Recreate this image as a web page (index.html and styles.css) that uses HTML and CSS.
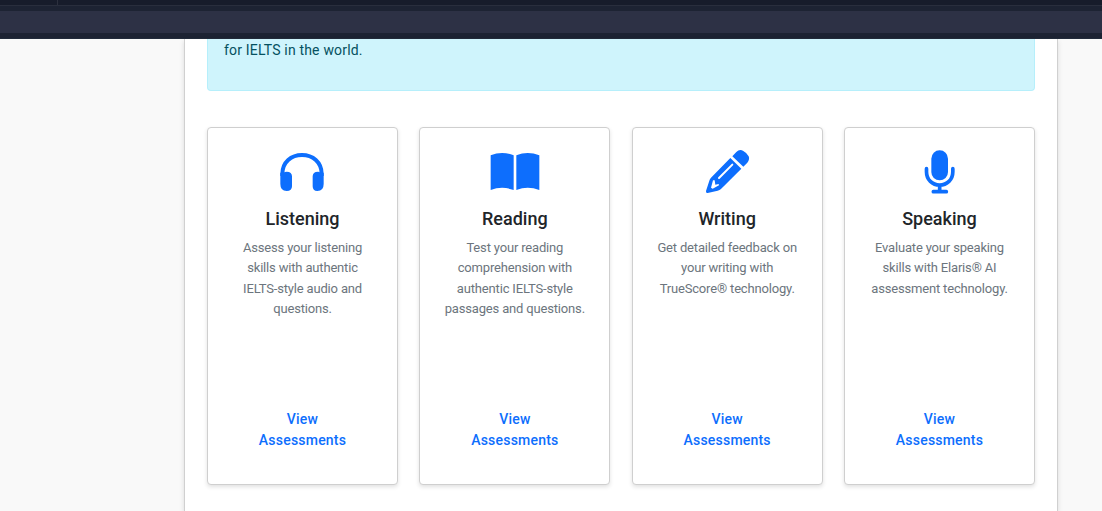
FILE: index.html
```
<!DOCTYPE html>
<html lang="en">
<head>
<meta charset="utf-8">
<title>IELTS Assessments</title>
<link rel="stylesheet" href="styles.css">
</head>
<body>
<header class="topbar">
  <div class="tabs"><span class="tab"></span></div>
  <div class="toolbar"></div>
</header>
<main class="panel">
  <div class="alert">for IELTS in the world.</div>
  <div class="cards">
    <section class="card">
      <svg class="icon" viewBox="-6 0 210 180"><path d="M37 108V102C37 66 64 45 96 45S155 66 155 102V108" fill="none" stroke="currentColor" stroke-width="12"/><path d="M31 98H40Q45 95 50 95Q66 95 66 109V139Q66 153 50 153Q31 153 31 132ZM161 98H152Q147 95 144 95Q128 95 128 109V139Q128 153 142 153Q161 153 161 132Z"/></svg>
      <h2 class="title">Listening</h2>
      <p class="copy">Assess your listening<br>skills with authentic<br>IELTS-style audio and<br>questions.</p>
      <a class="link">View<br>Assessments</a>
    </section>
    <section class="card">
      <svg class="icon" viewBox="0 0 210 180"><path d="M32 46Q66 32 101 46V150Q66 137 32 150ZM109 46Q143 32 178 46V150Q143 137 109 150Z"/></svg>
      <h2 class="title">Reading</h2>
      <p class="copy">Test your reading<br>comprehension with<br>authentic IELTS-style<br>passages and questions.</p>
      <a class="link">View<br>Assessments</a>
    </section>
    <section class="card">
      <svg class="icon" viewBox="0 0 210 180"><path d="M121 49L133 36Q143 26 154 33Q164 38 170 49Q174 58 166 68L154 80Z"/><path d="M115 54L148 86L87 147Q83 151 77 152L47 159Q41 160 42 153L52 122Q53 117 57 113Z"/><path d="M81 114L121 74" stroke="#fff" stroke-width="6" stroke-linecap="round"/><path d="M63 121L57 143L62 146L81 136L80 132L70 134L68 121Z" fill="#fff"/></svg>
      <h2 class="title">Writing</h2>
      <p class="copy">Get detailed feedback on<br>your writing with<br>TrueScore® technology.</p>
      <a class="link">View<br>Assessments</a>
    </section>
    <section class="card">
      <svg class="icon" viewBox="-2 -1 210 180"><rect x="80" y="30" width="50" height="90" rx="25"/><path d="M65.500 85V94C65.500 118 83 134 105 134S144.500 118 144.500 94V85M105 134V153M86 154H125" fill="none" stroke="currentColor" stroke-width="11" stroke-linecap="round"/></svg>
      <h2 class="title">Speaking</h2>
      <p class="copy">Evaluate your speaking<br>skills with Elaris® AI<br>assessment technology.</p>
      <a class="link">View<br>Assessments</a>
    </section>
  </div>
</main>
</body>
</html>
```
FILE: styles.css
```
* { box-sizing: border-box; }
body {
  margin: 0;
  height: 511px;
  overflow: hidden;
  display: flex;
  flex-direction: column;
  background: #f9f9f9;
  font-family: Roboto, "Liberation Sans", sans-serif;
  color: #212529;
}
.topbar { height: 39px; flex: none; background: #1d2333; border-bottom: 1px solid #222b3b; }
.tabs { height: 6px; background: #171c2b; border-bottom: 1px solid #292e3d; }
.tab { display: block; width: 58px; height: 5px; border-right: 1px solid #2c303e; }
.toolbar { height: 22px; margin-top: 5px; background: #2d3145; }
.panel {
  width: 874px;
  flex: 1;
  margin-left: 184px;
  padding: 0 22px;
  background: #fff;
  border: solid #d0d0d0;
  border-width: 0 1px;
  box-shadow: 0 2px 5px rgba(0, 0, 0, .12);
}
.alert {
  height: 52px;
  padding: 1px 16px 0;
  background: #cff4fc;
  border: 1px solid #b6effb;
  border-top: 0;
  border-radius: 0 0 4px 4px;
  color: #055160;
  font-size: 14px;
  line-height: 21px;
  letter-spacing: .18px;
}
.cards { display: grid; grid-template-columns: repeat(4, 1fr); gap: 21.3px; margin-top: 36px; }
.card {
  height: 358px;
  display: flex;
  flex-direction: column;
  align-items: center;
  padding: 12px 0 33px;
  text-align: center;
  background: #fff;
  border: 1px solid #cfcfcf;
  border-radius: 4px;
  box-shadow: 0 2px 4px rgba(0, 0, 0, .12);
}
.icon { width: 70px; height: 60px; flex: none; fill: currentColor; color: #0d6efd; }
.title { margin: 8px 0 9px; font-size: 18px; line-height: 21px; font-weight: 500; }
.copy { margin: 0; color: #6c757d; font-size: 13px; line-height: 20.4px; letter-spacing: -.17px; }
.link { margin-top: auto; color: #0d6efd; font-size: 14px; line-height: 21px; font-weight: 500; letter-spacing: .21px; }
```
